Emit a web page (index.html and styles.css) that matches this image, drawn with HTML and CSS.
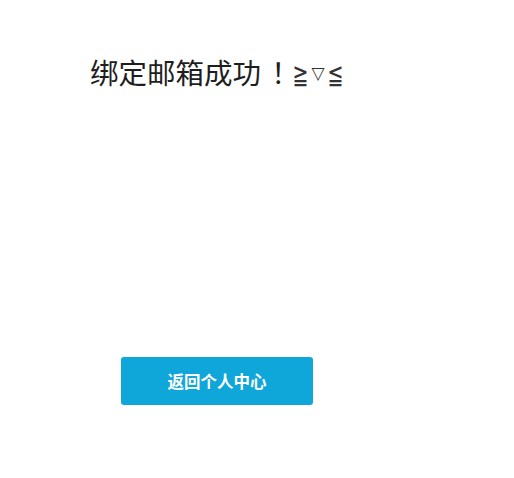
FILE: index.html
```html
<!DOCTYPE html>
<html lang="zh-CN">
<head>
<meta charset="utf-8">
<link rel="stylesheet" href="styles.css">
</head>
<body>
<div class="page">
  <h1 class="title"><span class="msg">绑定邮箱成功</span><span class="bang">！</span><span class="face"><span class="sym">≧</span><span class="tri">▽</span><span class="sym">≦</span></span></h1>
  <a class="btn" href="#">返回个人中心</a>
</div>
</body>
</html>
```
FILE: styles.css
```css
html, body {
  margin: 0;
  padding: 0;
  background: #fff;
}
.page {
  width: 514px;
  height: 478px;
  padding: 52px 0 0 90px;
  box-sizing: border-box;
  font-family: "Noto Sans CJK SC", "Noto Sans", sans-serif;
}
.title {
  display: flex;
  align-items: center;
  height: 38px;
  margin: 0;
  font-size: 28.5px;
  font-weight: normal;
  color: #1e1e1e;
  white-space: nowrap;
}
.bang {
  font-family: "Noto Sans CJK JP", sans-serif;
  margin-left: 3px;
}
.face {
  display: flex;
  align-items: center;
  gap: 3px;
  margin-top: 2px;
  font-family: "DejaVu Sans", sans-serif;
  font-size: 19px;
  color: #333;
}
.sym {
  display: block;
  transform: scale(1, 1.45);
  transform-origin: 50% 50%;
  margin-top: 4px;
}
.tri {
  display: block;
  font-size: 17px;
  margin-top: 1px;
}
.btn {
  display: flex;
  align-items: center;
  justify-content: center;
  width: 192px;
  height: 48px;
  margin: 267px 0 0 31px;
  border-radius: 3px;
  background: #0fa6d9;
  color: #fff;
  font-size: 16.5px;
  font-weight: bold;
  text-decoration: none;
}
```
